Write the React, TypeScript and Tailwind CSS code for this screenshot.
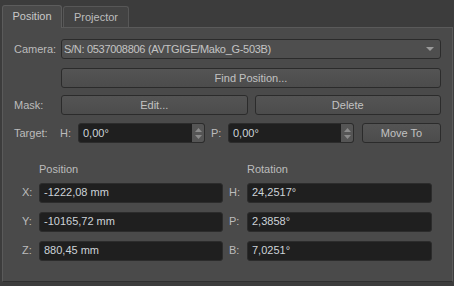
import React from "react";

const font = { fontFamily: '"Liberation Sans", Arial, sans-serif' };

function Btn({ children, className = "" }: { children: React.ReactNode; className?: string }) {
  return (
    <button className={`h-5 rounded-[3px] border border-[#2b2b2b] bg-gradient-to-b from-[#545454] to-[#4c4c4c] text-[11px] text-[#c2c2c2] flex items-center justify-center ${className}`}>
      {children}
    </button>
  );
}

function Field({ value, className = "" }: { value: string; className?: string }) {
  return (
    <div className={`h-5 rounded-[3px] border border-[#2c2c2c] bg-[#1f1f1f] px-[4px] flex items-center text-[11px] text-[#cdd3d8] ${className}`}>
      {value}
    </div>
  );
}

function Spin({ value, className = "" }: { value: string; className?: string }) {
  return (
    <div className={`h-5 rounded-[3px] border border-[#2c2c2c] bg-[#1f1f1f] flex ${className}`}>
      <div className="flex-1 px-[4px] flex items-center text-[11px] text-[#cdd3d8]">{value}</div>
      <div className="w-3 bg-[#555] rounded-r-[2px] flex flex-col items-center justify-center gap-[3px]">
        <svg width="7" height="4" viewBox="0 0 7 4">
          <path d="M0 4 L3.5 0 L7 4 Z" fill="#8a8a8a" />
        </svg>
        <svg width="7" height="4" viewBox="0 0 7 4">
          <path d="M0 0 L7 0 L3.5 4 Z" fill="#8a8a8a" />
        </svg>
      </div>
    </div>
  );
}

export default function App() {
  return (
    <div className="w-[454px] h-[286px] bg-[#3c3c3c] pt-1 select-none" style={font}>
      {/* Tabs */}
      <div className="flex items-end pl-[2px] h-[23px]">
        <div className="w-[60px] h-[23px] bg-[#4a4a4a] border border-b-0 border-[#5c5c5c] rounded-t-[3px] flex items-center justify-center text-[11px] text-[#c8c8c8] relative z-10 -mb-px pb-px">
          Position
        </div>
        <div className="w-[66px] h-[21px] ml-px bg-[#434343] border border-b-0 border-[#575757] rounded-t-[3px] flex items-center justify-center text-[11px] text-[#bdbdbd]">
          Projector
        </div>
      </div>

      {/* Panel */}
      <div className="ml-[2px] w-[451px] h-[255px] bg-[#4a4a4a] border border-[#5a5a5a] border-b-[#2f2f2f] pl-[11px] pr-[11px] pt-[11px] text-[11px] text-[#bcbcbc]">
        <div className="flex items-center h-5">
          <div className="w-[47px]">Camera:</div>
          <div className="flex-1 h-5 rounded-[3px] border border-[#2b2b2b] bg-[#4e4e4e] flex items-center pl-[2px] pr-[6px] text-[#c4c4c4]">
            <span className="flex-1 tracking-[-0.3px]">S/N: 0537008806 (AVTGIGE/Mako_G-503B)</span>
            <svg width="8" height="4" viewBox="0 0 8 4">
              <path d="M0 0 L8 0 L4 4 Z" fill="#9a9a9a" />
            </svg>
          </div>
        </div>

        <div className="flex mt-[9px]">
          <div className="w-[47px]" />
          <Btn className="flex-1">Find Position...</Btn>
        </div>

        <div className="flex items-center mt-[7px]">
          <div className="w-[47px]">Mask:</div>
          <div className="flex-1 flex gap-[7px]">
            <Btn className="flex-1">Edit...</Btn>
            <Btn className="flex-1">Delete</Btn>
          </div>
        </div>

        <div className="flex items-center mt-2">
          <div className="w-[46px]">Target:</div>
          <div className="w-[18px]">H:</div>
          <Spin value="0,00°" className="w-[127px]" />
          <div className="w-[17px] ml-[6px]">P:</div>
          <Spin value="0,00°" className="w-[126px]" />
          <Btn className="ml-2 flex-1">Move To</Btn>
        </div>

        {/* Position / Rotation */}
        <div className="grid grid-cols-[17px_184px_6px_18px_185px] ml-2 mt-5 gap-y-[9px] items-center">
          <div />
          <div className="-mt-[2px] -mb-[4px]">Position</div>
          <div />
          <div />
          <div className="-mt-[2px] -mb-[4px]">Rotation</div>

          <div>X:</div>
          <Field value="-1222,08 mm" />
          <div />
          <div>H:</div>
          <Field value="24,2517°" />

          <div>Y:</div>
          <Field value="-10165,72 mm" />
          <div />
          <div>P:</div>
          <Field value="2,3858°" />

          <div>Z:</div>
          <Field value="880,45 mm" />
          <div />
          <div>B:</div>
          <Field value="7,0251°" />
        </div>
      </div>
    </div>
  );
}
